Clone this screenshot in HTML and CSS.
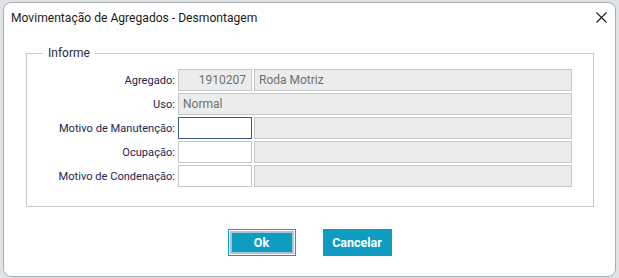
FILE: index.html
```html
<!DOCTYPE html>
<html lang="pt">
<head>
<meta charset="utf-8">
<title>Movimentação de Agregados - Desmontagem</title>
<link rel="stylesheet" href="styles.css">
</head>
<body>
<div class="dialog">
  <div class="dialog-header">
    <span class="dialog-title">Movimentação de Agregados - Desmontagem</span>
    <button class="close-btn" aria-label="Fechar">
      <svg width="11" height="11" viewBox="0 0 11 11"><path d="M0.5 0.5 L10.5 10.5 M10.5 0.5 L0.5 10.5" stroke="#1a1a1a" stroke-width="1.1" fill="none"/></svg>
    </button>
  </div>
  <fieldset class="group">
    <legend class="group-legend">Informe</legend>
    <div class="form-grid">
      <label class="field-label">Agregado:</label>
      <div class="input readonly num">1910207</div>
      <div class="input readonly">Roda Motriz</div>

      <label class="field-label">Uso:</label>
      <div class="input readonly span2">Normal</div>

      <label class="field-label">Motivo de Manutenção:</label>
      <div class="input editable focused"></div>
      <div class="input readonly"></div>

      <label class="field-label">Ocupação:</label>
      <div class="input editable"></div>
      <div class="input readonly"></div>

      <label class="field-label">Motivo de Condenação:</label>
      <div class="input editable"></div>
      <div class="input readonly"></div>
    </div>
  </fieldset>
  <div class="actions">
    <button class="btn btn-primary">Ok</button>
    <button class="btn">Cancelar</button>
  </div>
</div>
</body>
</html>
```

FILE: styles.css
```css
html, body {
  margin: 0;
  padding: 0;
}
body {
  width: 619px;
  height: 278px;
  overflow: hidden;
  background: #dfe3e6;
  font-family: "Segoe UI", Roboto, "Open Sans", sans-serif;
}
.dialog {
  box-sizing: border-box;
  margin: 2px 0 0 3px;
  width: 613px;
  height: 275px;
  background: #fff;
  border: 1px solid #a9adb0;
  border-radius: 8px;
}
.dialog-header {
  display: flex;
  align-items: center;
  justify-content: space-between;
  height: 29px;
  padding: 0 8px 0 7px;
}
.dialog-title {
  font-size: 12.1px;
  color: #1b1b1b;
}
.close-btn {
  border: 0;
  background: none;
  padding: 0;
  width: 12px;
  height: 12px;
  display: flex;
  align-items: center;
  justify-content: center;
}
.group {
  margin: 13px 0 0 22px;
  width: 568px;
  box-sizing: border-box;
  border: 1px solid #c8c9ca;
  padding: 8px 20px 19px 0;
}
.group-legend {
  margin-left: 16px;
  padding: 0 5px;
  font-size: 12px;
  color: #2a2a3a;
  line-height: 16px;
}
.form-grid {
  display: grid;
  grid-template-columns: 149px 74px 318px;
  grid-auto-rows: 22px;
  column-gap: 2px;
  row-gap: 2px;
}
.field-label {
  font-size: 11.1px;
  color: #1e1e50;
  text-align: right;
  align-self: center;
  padding-right: 1px;
  white-space: nowrap;
}
.input {
  box-sizing: border-box;
  height: 22px;
  border: 1px solid #c6c7c8;
  font-size: 12px;
  color: #707070;
  line-height: 20px;
  padding: 0 4px;
  white-space: nowrap;
}
.readonly {
  background: #ebecec;
}
.editable {
  background: #fff;
}
.focused {
  border-color: #3a5a85;
}
.num {
  text-align: right;
  padding-right: 5px;
}
.span2 {
  grid-column: 2 / span 2;
}
.actions {
  display: flex;
  justify-content: center;
  gap: 27px;
  margin-top: 22px;
}
.btn {
  box-sizing: border-box;
  width: 69px;
  height: 27px;
  border: 0;
  background: #0e9dc0;
  color: #fff;
  font-family: inherit;
  font-weight: 700;
  font-size: 12.5px;
  padding: 0;
}
.btn-primary {
  width: 64px;
  height: 23px;
  margin: 2px;
  border: 2px solid #a7c4da;
  box-shadow: 0 0 0 1px #fff, 0 0 0 2px #0e9dc0;
}
```
